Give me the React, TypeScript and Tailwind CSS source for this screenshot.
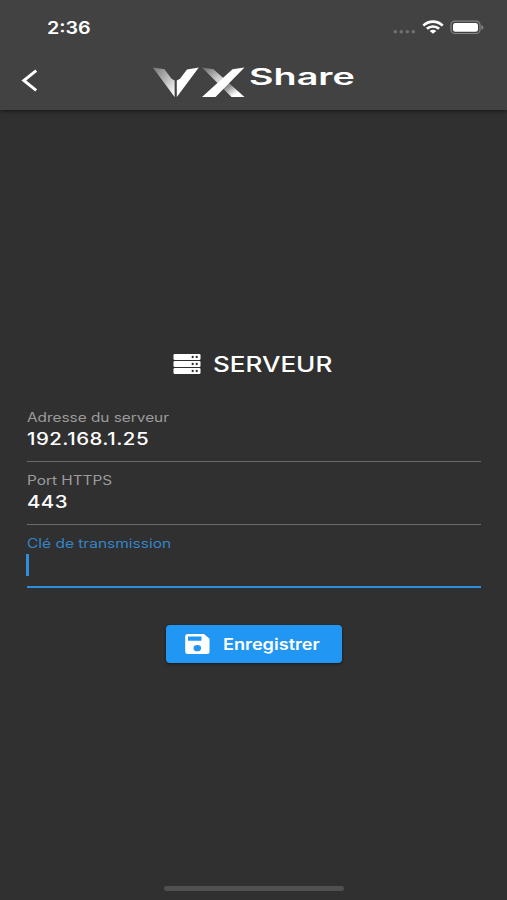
interface FieldProps {
  label: string;
  value: string;
}

function Field({ label, value }: FieldProps) {
  return (
    <div className="h-[63px] shrink-0">
      <div className="h-[54px] border-b-[1.5px] border-[#6a6a6a] pt-px">
        <div className="h-[18px] w-fit origin-left scale-x-[1.2] whitespace-nowrap text-[12.8px] leading-[18px] text-[#9c9c9c]">
          {label}
        </div>
        <div className="h-[24px] w-fit origin-left scale-x-[1.2] whitespace-nowrap text-[17px] font-medium leading-[24px] tracking-[0.4px] text-white">
          {value}
        </div>
      </div>
    </div>
  );
}

function StatusIcons() {
  return (
    <svg className="h-[20px] w-[92px]" viewBox="392 17 92 20">
      <g fill="#707070">
        <circle cx="395.3" cy="31.7" r="1.8" />
        <circle cx="401.3" cy="31.7" r="1.8" />
        <circle cx="407.3" cy="31.7" r="1.8" />
        <circle cx="413.3" cy="31.7" r="1.8" />
      </g>
      <g fill="none" stroke="#fff" strokeWidth="2.7">
        <path d="M423.3 25.6 C428.8 20.2 437.2 20.2 442.7 25.6" />
        <path d="M426.9 28.8 C430.2 25.7 435.8 25.7 439.1 28.8" />
      </g>
      <path d="M429.7 30.9 Q433 28.4 436.3 30.9 L433 33.8 Z" fill="#fff" />
      <rect x="451" y="21.1" width="29" height="12.4" rx="3.8" fill="none" stroke="#868686" strokeWidth="1.2" />
      <rect x="453" y="22.9" width="25" height="8.8" rx="2.3" fill="#fff" />
      <path d="M481.4 25 Q483.4 25.8 483.4 27.4 Q483.4 29 481.4 29.8 Z" fill="#868686" />
    </svg>
  );
}

function Logo() {
  return (
    <svg className="h-[34px] w-[94px]" viewBox="152 65 94 34">
      <defs>
        <linearGradient id="wing" x1="0" y1="0" x2="0.9" y2="1">
          <stop offset="0" stopColor="#777" />
          <stop offset="0.55" stopColor="#bbb" />
          <stop offset="1" stopColor="#fff" />
        </linearGradient>
        <linearGradient id="cross" x1="0" y1="0" x2="1" y2="1">
          <stop offset="0" stopColor="#666" />
          <stop offset="0.4" stopColor="#d5d5d5" />
          <stop offset="0.62" stopColor="#888" />
          <stop offset="0.85" stopColor="#fff" />
        </linearGradient>
      </defs>
      <path d="M152.8 67.6 L164.5 69.3 L171.5 78.7 L174.6 80.5 V97 Z" fill="url(#wing)" />
      <path d="M198.8 67.6 L187 69.4 L180 78.7 L176.8 80.5 V97 Z" fill="#fff" />
      <path d="M202 67.6 L213.5 69.2 L244.5 97 H231.5 Z" fill="url(#cross)" />
      <path d="M244.5 67.6 L232.5 69.2 L202 97 H215.5 Z" fill="#fff" />
    </svg>
  );
}

function ServerIcon() {
  return (
    <svg className="h-[20px] w-[28px]" viewBox="0 0 28 20">
      {[0, 7, 14].map((y) => (
        <g key={y}>
          <rect x="0.5" y={y} width="27" height="6" rx="1.3" fill="#fff" />
          <circle cx="19.7" cy={y + 3} r="1.15" fill="#303030" />
          <circle cx="23.7" cy={y + 3} r="1.15" fill="#303030" />
        </g>
      ))}
    </svg>
  );
}

function SaveIcon() {
  return (
    <svg className="h-[20px] w-[25px]" viewBox="0 0 25 20">
      <path
        fillRule="evenodd"
        d="M2.8 0 H19 L24.5 4.7 V17.8 Q24.5 20 21.8 20 H2.8 Q0.2 20 0.2 17.8 V2.2 Q0.2 0 2.8 0 Z M3 2.6 V6.8 H16.5 V2.6 Z M12.3 11.1 A3.8 3.1 0 1 0 12.3 17.3 A3.8 3.1 0 1 0 12.3 11.1 Z"
        fill="#fff"
      />
    </svg>
  );
}

export default function App() {
  return (
    <div className="flex h-[900px] w-[507px] flex-col overflow-hidden bg-[#303030] font-['Inter','Liberation_Sans',sans-serif] text-white">
      <header className="h-[110px] shrink-0 bg-[#424242] shadow-[0_1px_4px_rgba(0,0,0,0.6)]">
        <div className="flex h-[54px] items-center justify-between pl-[47px] pr-[23px]">
          <span className="origin-left scale-x-[1.16] pt-[2px] text-[17px] font-semibold leading-none">2:36</span>
          <StatusIcons />
        </div>
        <div className="flex h-[56px] items-start pl-[21px] pt-[11px]">
          <svg className="mt-[4px] h-[23px] w-[18px] shrink-0" viewBox="0 0 18 23">
            <path d="M15.2 1.7 L2.8 11.5 L15.2 21.3" fill="none" stroke="#fff" strokeWidth="2.9" />
          </svg>
          <div className="ml-[113px] flex items-start">
            <Logo />
            <span className="ml-[3px] origin-left scale-x-[1.64] pt-px text-[23px] font-semibold leading-[22px]">Share</span>
          </div>
        </div>
      </header>

      <main className="flex grow flex-col px-[27px] pt-[239px]">
        <div className="flex h-[30px] shrink-0 items-center pl-[146px]">
          <ServerIcon />
          <h1 className="ml-[12px] origin-left scale-x-[1.24] whitespace-nowrap text-[21px] font-medium leading-none">SERVEUR</h1>
        </div>

        <form className="mt-[29px] flex w-[454px] flex-col">
          <Field label="Adresse du serveur" value="192.168.1.25" />
          <Field label="Port HTTPS" value="443" />
          <div className="h-[54px] border-b-2 border-[#2e8edc] pt-px">
            <div className="h-[18px] w-fit origin-left scale-x-[1.21] whitespace-nowrap text-[12.8px] leading-[18px] text-[#3585c8]">
              Clé de transmission
            </div>
            <div className="-ml-px mt-px h-[22px] w-[2.5px] bg-[#2e8edc]" />
          </div>
        </form>

        <button className="ml-[139px] mt-[37px] flex h-[38px] w-[176px] shrink-0 items-center rounded-[4px] bg-[#2196f3] pl-[19px] shadow-[0_1px_3px_rgba(0,0,0,0.5)]">
          <SaveIcon />
          <span className="ml-[13px] origin-left scale-x-[1.17] whitespace-nowrap pt-px text-[15.5px] font-semibold leading-none">Enregistrer</span>
        </button>
      </main>

      <div className="mb-[9px] ml-[164px] h-[5px] w-[180px] shrink-0 rounded-full bg-[#505050]" />
    </div>
  );
}
